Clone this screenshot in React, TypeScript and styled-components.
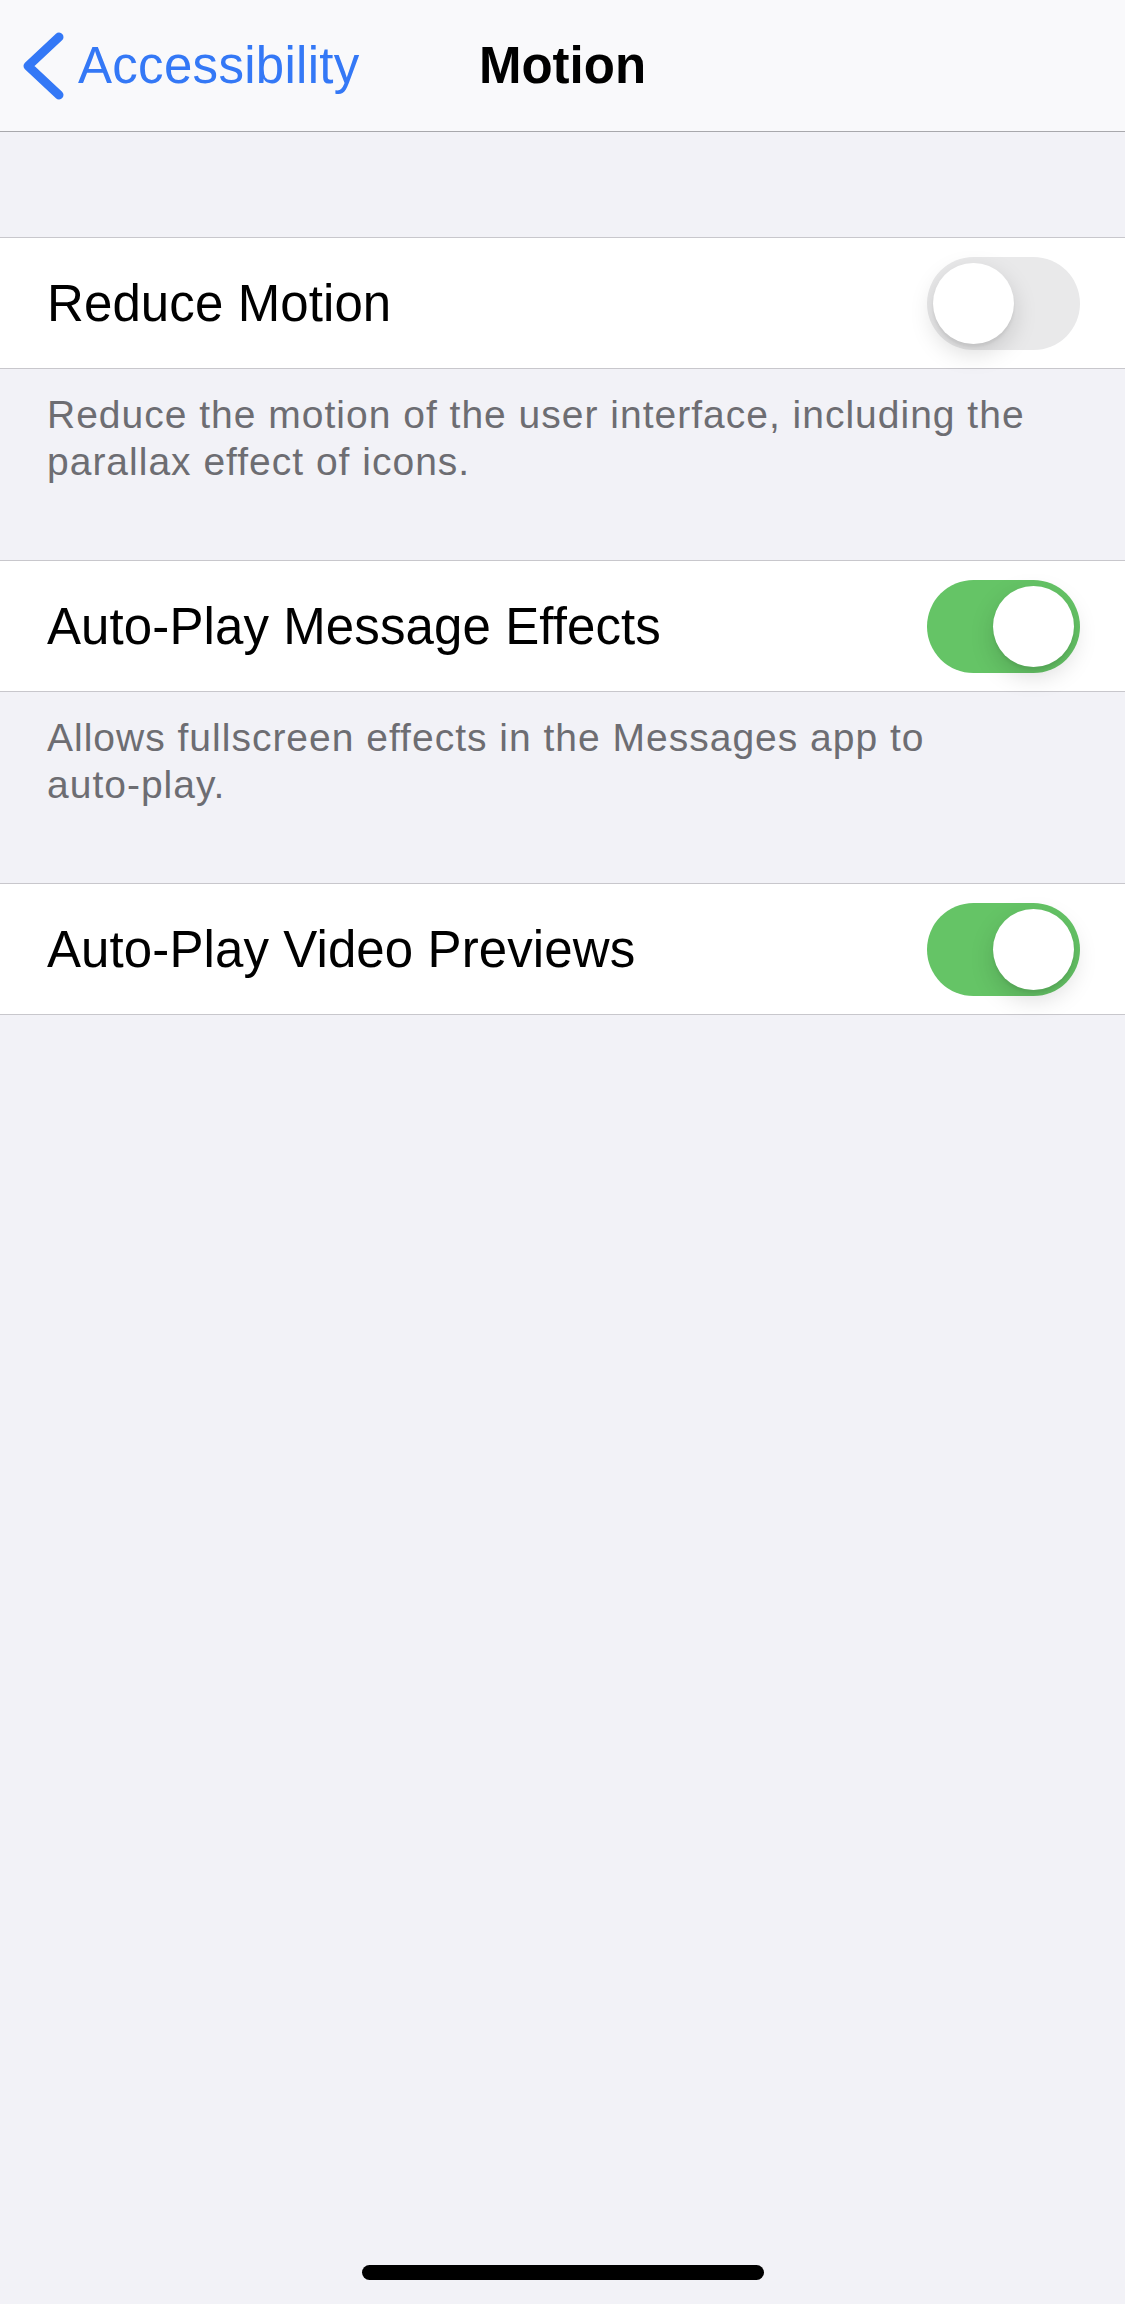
import React, { FC, ReactNode } from 'react';
import styled, { createGlobalStyle } from 'styled-components';

const GlobalStyle = createGlobalStyle`
  html, body {
    margin: 0;
    padding: 0;
    background: #f2f2f7;
    font-family: 'Liberation Sans', Arial, sans-serif;
  }
`;

const StyledScreen = styled.div`
  display: flex;
  flex-direction: column;
  min-height: 2304px;
  width: 1125px;
  background: #f2f2f7;
`;

const StyledNavBar = styled.header`
  display: grid;
  grid-template-columns: 1fr auto 1fr;
  align-items: center;
  height: 131px;
  background: #f9f9fb;
  border-bottom: 1.5px solid #a8a8ac;
`;

const StyledBackButton = styled.div`
  display: flex;
  align-items: center;
  gap: 8px;
  padding-left: 20px;
  color: #3478f6;
  font-size: 51px;
  letter-spacing: 0.3px;
  cursor: pointer;
`;

const StyledTitle = styled.h1`
  margin: 0;
  font-size: 51px;
  font-weight: 700;
  color: #000;
`;

const StyledTopGap = styled.div`
  height: 105px;
`;

const StyledRow = styled.div`
  display: flex;
  align-items: center;
  justify-content: space-between;
  height: 130px;
  padding: 0 45px 0 47px;
  background: #fff;
  border-top: 1px solid #c8c7cc;
  border-bottom: 1px solid #c8c7cc;
`;

const StyledLabel = styled.span`
  font-size: 51px;
  letter-spacing: 0.1px;
  color: #000;
`;

const StyledFooter = styled.p`
  margin: 0;
  padding: 22px 47px 75px;
  font-size: 39px;
  line-height: 47px;
  letter-spacing: 1px;
  color: #6d6d72;
`;

const StyledNoWrap = styled.span`
  white-space: nowrap;
`;

const StyledTrack = styled.div<{ $on: boolean }>`
  position: relative;
  width: 153px;
  height: 93px;
  border-radius: 47px;
  background: ${({ $on }) => ($on ? '#65c466' : '#e9e9ea')};
  flex-shrink: 0;
`;

const StyledKnob = styled.div<{ $on: boolean }>`
  position: absolute;
  top: 6px;
  left: ${({ $on }) => ($on ? '66px' : '6px')};
  width: 81px;
  height: 81px;
  border-radius: 50%;
  background: #fff;
  box-shadow: 0 9px 24px rgba(0, 0, 0, 0.15), 0 3px 3px rgba(0, 0, 0, 0.06);
`;

const StyledFill = styled.div`
  flex: 1;
`;

const StyledHomeArea = styled.div`
  display: flex;
  justify-content: center;
  padding-bottom: 24px;
`;

const StyledHomeBar = styled.div`
  width: 402px;
  height: 15px;
  border-radius: 8px;
  background: #000;
`;

const Toggle: FC<{ on: boolean }> = ({ on }) => (
  <StyledTrack $on={on}>
    <StyledKnob $on={on} />
  </StyledTrack>
);

const Chevron: FC = () => (
  <svg width="50" height="74" viewBox="0 0 50 74" fill="none">
    <path
      d="M39 8 L8 37 L39 66"
      stroke="#3478f6"
      strokeWidth="9"
      strokeLinecap="round"
      strokeLinejoin="round"
    />
  </svg>
);

const settings: { label: string; on: boolean; footer?: ReactNode }[] = [
  {
    label: 'Reduce Motion',
    on: false,
    footer: 'Reduce the motion of the user interface, including the parallax effect of icons.',
  },
  {
    label: 'Auto-Play Message Effects',
    on: true,
    footer: (
      <>
        Allows fullscreen effects in the Messages app to <StyledNoWrap>auto-play.</StyledNoWrap>
      </>
    ),
  },
  { label: 'Auto-Play Video Previews', on: true },
];

const App: FC = () => (
  <>
    <GlobalStyle />
    <StyledScreen>
      <StyledNavBar>
        <StyledBackButton>
          <Chevron />
          Accessibility
        </StyledBackButton>
        <StyledTitle>Motion</StyledTitle>
        <div />
      </StyledNavBar>
      <StyledTopGap />
      {settings.map((s) => (
        <React.Fragment key={s.label}>
          <StyledRow>
            <StyledLabel>{s.label}</StyledLabel>
            <Toggle on={s.on} />
          </StyledRow>
          {s.footer && <StyledFooter>{s.footer}</StyledFooter>}
        </React.Fragment>
      ))}
      <StyledFill />
      <StyledHomeArea>
        <StyledHomeBar />
      </StyledHomeArea>
    </StyledScreen>
  </>
);

export default App;
